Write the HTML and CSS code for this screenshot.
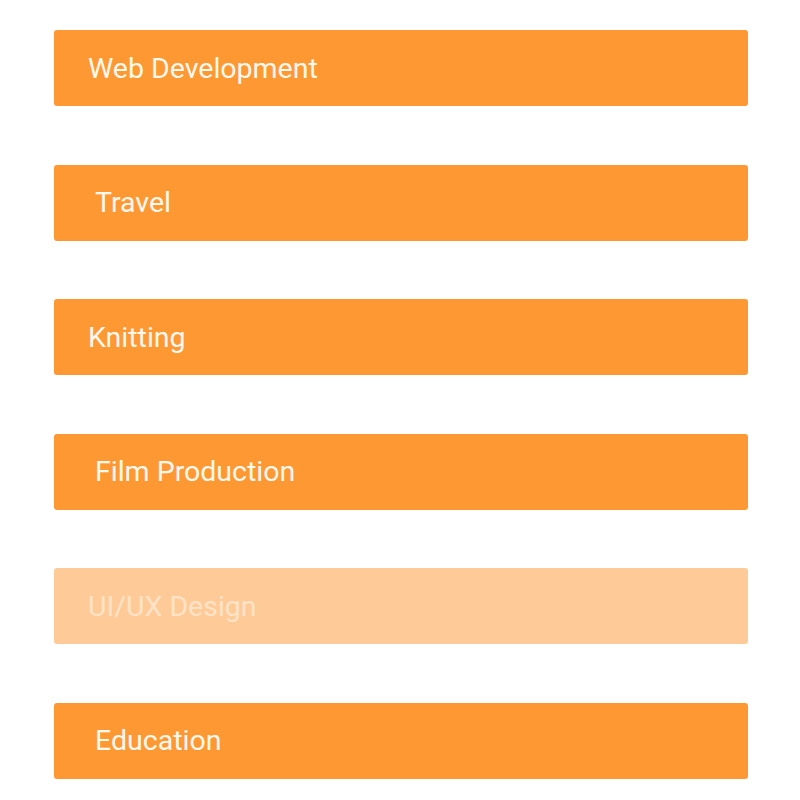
FILE: index.html
```html
<!DOCTYPE html>
<html>
<head>
<meta charset="utf-8">
<link rel="stylesheet" href="styles.css">
</head>
<body>
<div class="list">
  <div class="item">Web Development</div>
  <div class="item item--indent">Travel</div>
  <div class="item">Knitting</div>
  <div class="item item--indent">Film Production</div>
  <div class="item item--disabled">UI/UX Design</div>
  <div class="item item--indent">Education</div>
</div>
</body>
</html>
```
FILE: styles.css
```css
html, body {
  margin: 0;
  padding: 0;
  background: #ffffff;
}
.list {
  display: flex;
  flex-direction: column;
  gap: 58.5px;
  padding: 30px 52px 0 54px;
}
.item {
  height: 76px;
  display: flex;
  align-items: center;
  padding-left: 34px;
  background: #fe9833;
  border-radius: 3px;
  color: #fff8ee;
  font-family: Roboto, "Liberation Sans", sans-serif;
  font-size: 28.5px;
  box-sizing: border-box;
}
.item--indent {
  padding-left: 41px;
}
.item--disabled {
  background: #fecb98;
  color: #fee3c8;
}
```
